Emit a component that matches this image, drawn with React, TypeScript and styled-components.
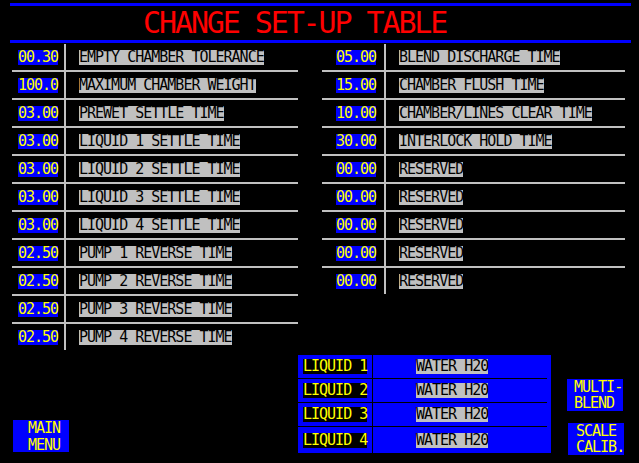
import React from "react";
import styled, { createGlobalStyle } from "styled-components";

const GlobalStyle = createGlobalStyle`
  html, body { margin: 0; padding: 0; background: #000; }
  #root { width: 639px; height: 463px; overflow: hidden; }
`;

const Screen = styled.div`
  width: 639px;
  height: 463px;
  background: #000;
  display: flex;
  flex-direction: column;
  font-family: "DejaVu Sans Mono", "Liberation Mono", monospace;
  font-size: 15px;
  letter-spacing: -1px;
`;

const Header = styled.header`
  padding: 3px 8px 0 10px;
  display: flex;
  flex-direction: column;
`;

const Rule = styled.div`
  height: 3px;
  background: #0000ff;
`;

const Title = styled.h1`
  margin: 0;
  height: 34px;
  padding-left: 133px;
  color: #ff0000;
  font-size: 30px;
  font-weight: normal;
  line-height: 34px;
  letter-spacing: -2.1px;
  white-space: nowrap;
`;

const Content = styled.main`
  display: flex;
  flex: 1;
`;

const LeftCol = styled.section`
  width: 286px;
  margin-left: 12px;
  display: flex;
  flex-direction: column;
`;

const RightCol = styled.section`
  flex: 1;
  display: flex;
  flex-direction: column;
`;

const Table = styled.div<{ $width: number; $indent: number }>`
  width: ${(p) => p.$width}px;
  margin: 1px 0 0 ${(p) => p.$indent}px;
  display: flex;
  flex-direction: column;
`;

const Row = styled.div`
  display: flex;
  height: 26px;
  border-bottom: 2px solid #c0c0c0;
  &:last-child {
    border-bottom: none;
  }
`;

const ValueCell = styled.div<{ $width: number; $gap: number }>`
  width: ${(p) => p.$width}px;
  padding-right: ${(p) => p.$gap}px;
  box-sizing: border-box;
  display: flex;
  align-items: center;
  justify-content: flex-end;
`;

const ValueBox = styled.span`
  min-width: 40px;
  height: 15px;
  line-height: 15px;
  background: #0000ff;
  color: #ffff00;
  white-space: nowrap;
  letter-spacing: -1.05px;
`;

const LabelCell = styled.div`
  flex: 1;
  border-left: 2px solid #c0c0c0;
  padding-left: 13px;
  display: flex;
  align-items: center;
`;

const LabelBox = styled.span`
  height: 15px;
  line-height: 15px;
  background: #c0c0c0;
  color: #000;
  white-space: pre;
`;

const Bottom = styled.div`
  margin-top: 61px;
  display: flex;
  align-items: flex-start;
`;

const LiquidPanel = styled.div`
  width: 253px;
  height: 98px;
  box-sizing: border-box;
  padding-right: 4px;
  background: #0000ff;
  display: flex;
  flex-direction: column;
`;

const LiquidRow = styled.div`
  display: flex;
  height: 23px;
  border-bottom: 1px solid #000;
  &:last-child {
    flex: 1;
    border-bottom: none;
  }
`;

const NameCell = styled.div`
  width: 75px;
  box-sizing: border-box;
  padding-left: 5px;
  border-right: 1px solid #000;
  display: flex;
  align-items: center;
`;

const NameBox = styled.span`
  min-width: 64px;
  height: 15px;
  line-height: 15px;
  background: #000;
  color: #ffff00;
  white-space: pre;
`;

const FluidCell = styled.div`
  flex: 1;
  padding-left: 43px;
  display: flex;
  align-items: center;
`;

const FluidBox = styled.span`
  height: 15px;
  line-height: 15px;
  background: #c0c0c0;
  color: #000;
  white-space: pre;
`;

const ButtonCol = styled.div`
  margin-left: 16px;
  padding-top: 24px;
  display: flex;
  flex-direction: column;
  gap: 12px;
`;

const SideButton = styled.button<{ $shift?: number; $pad?: number }>`
  width: 56px;
  height: 32px;
  margin: 0 0 0 ${(p) => p.$shift ?? 0}px;
  padding: 0 0 0 ${(p) => p.$pad ?? 7}px;
  border: none;
  background: #0000ff;
  color: #ffff00;
  font: inherit;
  letter-spacing: -1px;
  line-height: 16px;
  text-align: left;
  white-space: pre;
  display: block;
`;

const MenuButton = styled(SideButton)`
  margin-top: 70px;
  line-height: 16.5px;
`;

const leftRows: [string, string][] = [
  ["00.30", "EMPTY CHAMBER TOLERANCE"],
  ["100.0", "MAXIMUM CHAMBER WEIGHT"],
  ["03.00", "PREWET SETTLE TIME"],
  ["03.00", "LIQUID 1 SETTLE TIME"],
  ["03.00", "LIQUID 2 SETTLE TIME"],
  ["03.00", "LIQUID 3 SETTLE TIME"],
  ["03.00", "LIQUID 4 SETTLE TIME"],
  ["02.50", "PUMP 1 REVERSE TIME"],
  ["02.50", "PUMP 2 REVERSE TIME"],
  ["02.50", "PUMP 3 REVERSE TIME"],
  ["02.50", "PUMP 4 REVERSE TIME"],
];

const rightRows: [string, string][] = [
  ["05.00", "BLEND DISCHARGE TIME"],
  ["15.00", "CHAMBER FLUSH TIME"],
  ["10.00", "CHAMBER/LINES CLEAR TIME"],
  ["30.00", "INTERLOCK HOLD TIME"],
  ["00.00", "RESERVED"],
  ["00.00", "RESERVED"],
  ["00.00", "RESERVED"],
  ["00.00", "RESERVED"],
  ["00.00", "RESERVED"],
];

const liquids = ["LIQUID 1", "LIQUID 2", "LIQUID 3", "LIQUID 4"];

export default function App() {
  return (
    <>
      <GlobalStyle />
      <Screen>
        <Header>
          <Rule />
          <Title>CHANGE SET-UP TABLE</Title>
          <Rule />
        </Header>
        <Content>
          <LeftCol>
            <Table $width={286} $indent={0}>
              {leftRows.map(([v, l], i) => (
                <Row key={i}>
                  <ValueCell $width={52} $gap={6}>
                    <ValueBox>{v}</ValueBox>
                  </ValueCell>
                  <LabelCell>
                    <LabelBox>{l}</LabelBox>
                  </LabelCell>
                </Row>
              ))}
            </Table>
            <MenuButton $shift={1} $pad={15}>{"MAIN\nMENU"}</MenuButton>
          </LeftCol>
          <RightCol>
            <Table $width={303} $indent={24}>
              {rightRows.map(([v, l], i) => (
                <Row key={i}>
                  <ValueCell $width={62} $gap={8}>
                    <ValueBox>{v}</ValueBox>
                  </ValueCell>
                  <LabelCell>
                    <LabelBox>{l}</LabelBox>
                  </LabelCell>
                </Row>
              ))}
            </Table>
            <Bottom>
              <LiquidPanel>
                {liquids.map((n) => (
                  <LiquidRow key={n}>
                    <NameCell>
                      <NameBox>{n}</NameBox>
                    </NameCell>
                    <FluidCell>
                      <FluidBox>WATER H20</FluidBox>
                    </FluidCell>
                  </LiquidRow>
                ))}
              </LiquidPanel>
              <ButtonCol>
                <SideButton>{"MULTI-\nBLEND"}</SideButton>
                <SideButton $shift={1} $pad={8}>{"SCALE\nCALIB."}</SideButton>
              </ButtonCol>
            </Bottom>
          </RightCol>
        </Content>
      </Screen>
    </>
  );
}
